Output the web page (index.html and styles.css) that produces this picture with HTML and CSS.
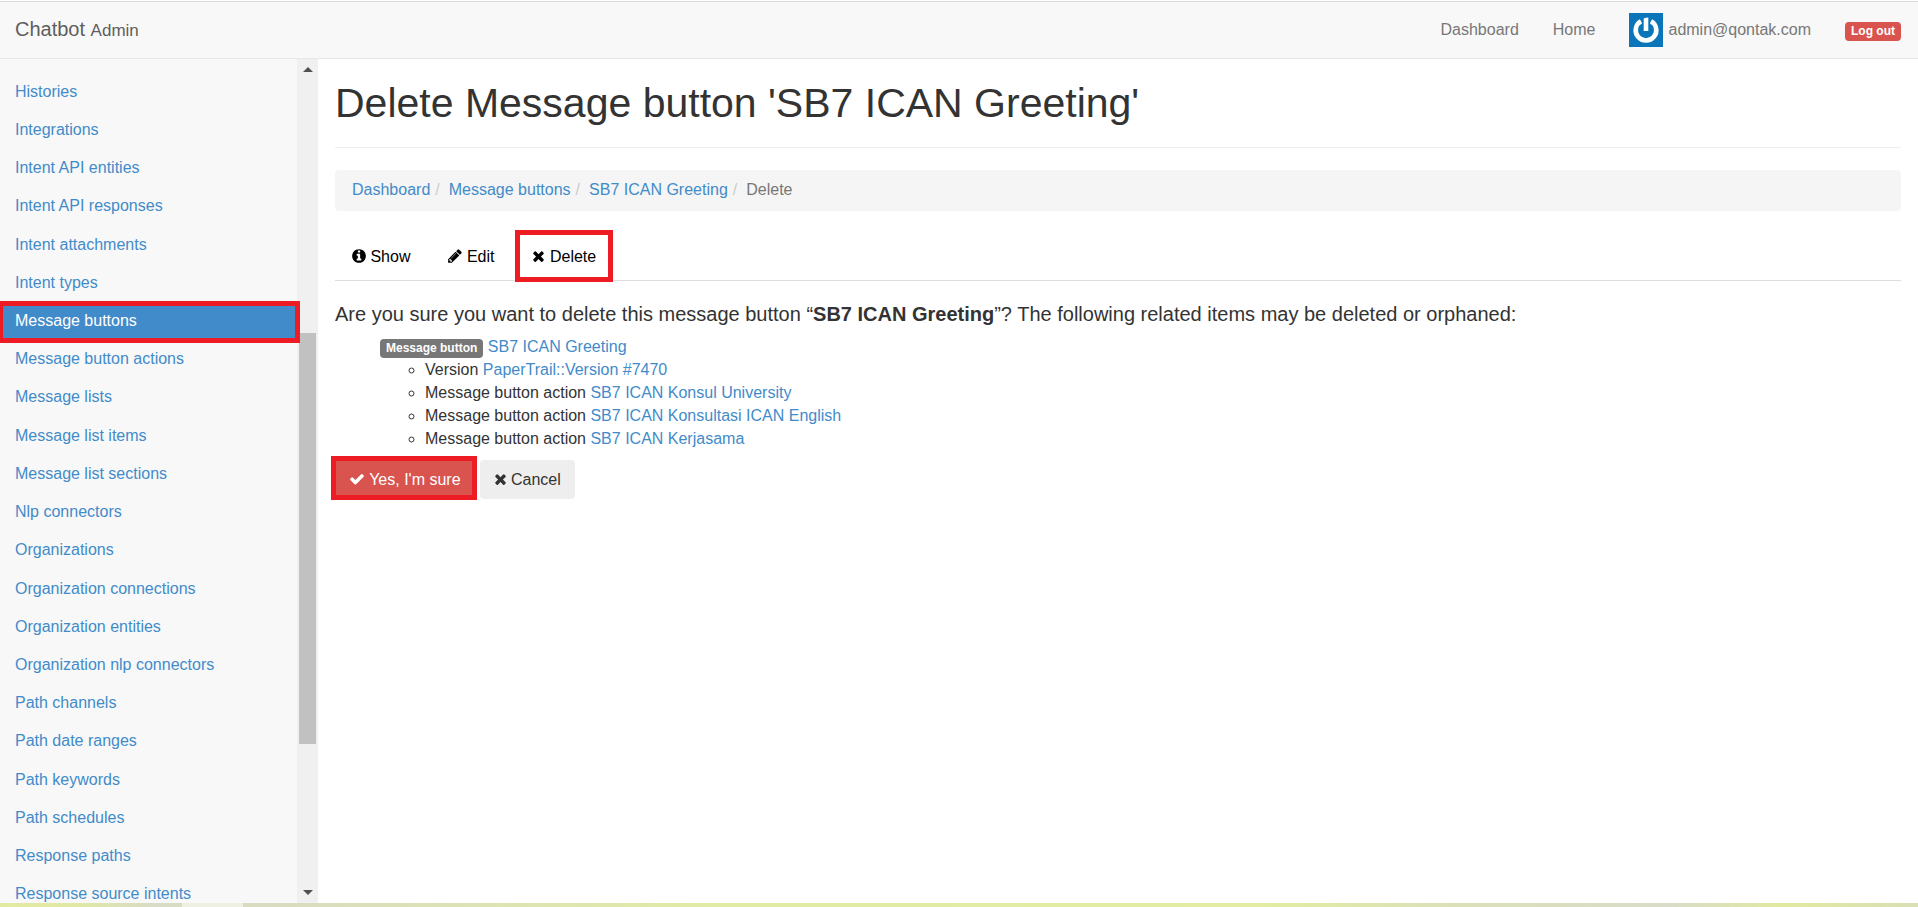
FILE: index.html
```html
<!DOCTYPE html>
<html lang="en">
<head>
<meta charset="utf-8">
<title>Delete Message button | Chatbot Admin</title>
<link rel="stylesheet" href="styles.css">
</head>
<body>
<svg class="sprite" aria-hidden="true">
  <symbol id="i-info" viewBox="128 0 1536 1792"><path d="M1152 1376v-160q0-14-9-23t-23-9h-96v-512q0-14-9-23t-23-9h-320q-14 0-23 9t-9 23v160q0 14 9 23t23 9h96v320h-96q-14 0-23 9t-9 23v160q0 14 9 23t23 9h448q14 0 23-9t9-23zm-128-896v-160q0-14-9-23t-23-9h-192q-14 0-23 9t-9 23v160q0 14 9 23t23 9h192q14 0 23-9t9-23zm640 416q0 209-103 385.5t-279.5 279.5-385.5 103-385.5-103-279.5-279.5-103-385.5 103-385.5 279.5-279.5 385.5-103 385.5 103 279.5 279.5 103 385.5z"/></symbol>
  <symbol id="i-pencil" viewBox="128 0 1536 1792"><path d="M491 1536l91-91-235-235-91 91v107h128v128h107zm523-928q0-22-22-22-10 0-17 7l-542 542q-7 7-7 17 0 22 22 22 10 0 17-7l542-542q7-7 7-17zm-54-192l416 416-832 832h-416v-416zm683 96q0 53-37 90l-166 166-416-416 166-165q36-38 90-38 53 0 91 38l235 234q37 39 37 91z"/></symbol>
  <symbol id="i-times" viewBox="192 0 1408 1792"><path d="M1490 1322q0 40-28 68l-136 136q-28 28-68 28t-68-28l-294-294-294 294q-28 28-68 28t-68-28l-136-136q-28-28-28-68t28-68l294-294-294-294q-28-28-28-68t28-68l136-136q28-28 68-28t68 28l294 294 294-294q28-28 68-28t68 28l136 136q28 28 28 68t-28 68l-294 294 294 294q28 28 28 68z"/></symbol>
  <symbol id="i-check" viewBox="0 0 1792 1792"><path d="M1671 566q0 40-28 68l-724 724-136 136q-28 28-68 28t-68-28l-136-136-362-362q-28-28-28-68t28-68l136-136q28-28 68-28t68 28l294 295 656-657q28-28 68-28t68 28l136 136q28 28 28 68z"/></symbol>
</svg>

<header class="topbar">
  <a class="brand" href="#">Chatbot <small>Admin</small></a>
  <nav class="topnav">
    <a href="#">Dashboard</a>
    <a href="#">Home</a>
    <a class="user" href="#">
      <svg class="avatar" viewBox="0 0 34 34" aria-hidden="true"><rect width="34" height="34" fill="#0a75b8"/><path d="M12 8.200A10.300 10.300 0 1 0 22 8.200" fill="none" stroke="#fff" stroke-width="4.600"/><path d="M14.700 5.600Q17 4.600 19.300 4.600V18H14.700Z" fill="#fff"/></svg>
      <span>admin@qontak.com</span>
    </a>
    <a href="#"><span class="label label-danger">Log out</span></a>
  </nav>
</header>

<div class="body">
  <aside class="sidebar">
    <ul class="menu">
      <li><a href="#">Histories</a></li>
      <li><a href="#">Integrations</a></li>
      <li><a href="#">Intent API entities</a></li>
      <li><a href="#">Intent API responses</a></li>
      <li><a href="#">Intent attachments</a></li>
      <li><a href="#">Intent types</a></li>
      <li class="active"><a href="#">Message buttons</a></li>
      <li><a href="#">Message button actions</a></li>
      <li><a href="#">Message lists</a></li>
      <li><a href="#">Message list items</a></li>
      <li><a href="#">Message list sections</a></li>
      <li><a href="#">Nlp connectors</a></li>
      <li><a href="#">Organizations</a></li>
      <li><a href="#">Organization connections</a></li>
      <li><a href="#">Organization entities</a></li>
      <li><a href="#">Organization nlp connectors</a></li>
      <li><a href="#">Path channels</a></li>
      <li><a href="#">Path date ranges</a></li>
      <li><a href="#">Path keywords</a></li>
      <li><a href="#">Path schedules</a></li>
      <li><a href="#">Response paths</a></li>
      <li><a href="#">Response source intents</a></li>
    </ul>
    <div class="scrollbar" aria-hidden="true">
      <svg class="arrow" viewBox="0 0 10 5"><path d="M0 5L5 0L10 5Z"/></svg>
      <div class="track"><div class="thumb"></div></div>
      <svg class="arrow" viewBox="0 0 10 5"><path d="M0 0L5 5L10 0Z"/></svg>
    </div>
  </aside>

  <main class="content">
    <h1>Delete Message button 'SB7 ICAN Greeting'</h1>
    <ol class="breadcrumb">
      <li><a href="#">Dashboard</a></li>
      <li><a href="#">Message buttons</a></li>
      <li><a href="#">SB7 ICAN Greeting</a></li>
      <li class="current">Delete</li>
    </ol>
    <nav class="tabs">
      <a href="#"><svg class="icon"><use href="#i-info"/></svg> Show</a>
      <a href="#"><svg class="icon"><use href="#i-pencil"/></svg> Edit</a>
      <a class="marked" href="#"><svg class="icon icon-times"><use href="#i-times"/></svg> Delete</a>
    </nav>
    <p class="lead">Are you sure you want to delete this message button “<strong>SB7 ICAN Greeting</strong>”? The following related items may be deleted or orphaned:</p>
    <ul class="related">
      <li>
        <span class="label">Message button</span> <a href="#">SB7 ICAN Greeting</a>
        <ul>
          <li>Version <a href="#">PaperTrail::Version #7470</a></li>
          <li>Message button action <a href="#">SB7 ICAN Konsul University</a></li>
          <li>Message button action <a href="#">SB7 ICAN Konsultasi ICAN English</a></li>
          <li>Message button action <a href="#">SB7 ICAN Kerjasama</a></li>
        </ul>
      </li>
    </ul>
    <form class="actions">
      <button class="btn btn-danger marked" type="button"><svg class="icon icon-check"><use href="#i-check"/></svg> Yes, I'm sure</button>
      <button class="btn" type="button"><svg class="icon icon-times"><use href="#i-times"/></svg> Cancel</button>
    </form>
  </main>
</div>
<div class="desktop-strip" aria-hidden="true"><i></i></div>
</body>
</html>
```

FILE: styles.css
```css
* { box-sizing: border-box; }

body {
  margin: 0;
  height: 100vh;
  display: flex;
  flex-direction: column;
  overflow: hidden;
  background: #fff;
  color: #333;
  font: 16px/23px "Liberation Sans", Arial, sans-serif;
}

a { color: #428bca; text-decoration: none; }
ul, ol { list-style: none; margin: 0; padding: 0; }
.sprite { display: none; }

.icon {
  width: 14px;
  height: 16px;
  fill: currentColor;
  vertical-align: -2px;
}
.icon-times { width: 13px; }
.icon-check { width: 16px; }

.label {
  display: inline-block;
  padding: 0 6px;
  border-radius: 4px;
  background: #777;
  color: #fff;
  font-size: 12px;
  font-weight: bold;
  line-height: 19px;
}
.label-danger { background: #d9534f; }

/* Top bar */
.topbar {
  flex: none;
  display: flex;
  justify-content: space-between;
  align-items: center;
  height: 59px;
  border-bottom: 1px solid #e7e7e7;
  background: #f8f8f8;
  box-shadow: inset 0 1px #fff, inset 0 2px #d9dcdb;
}
.brand { padding: 2px 0 0 15px; color: #5e5e5e; font-size: 20px; }
.brand small { font-size: 17px; }
.topnav { display: flex; align-items: center; }
.topnav a { padding: 0 17px; color: #777; }
.topnav .user { display: flex; align-items: center; gap: 5px; }
.topnav .label { display: block; margin-top: 4px; }
.avatar { width: 34px; height: 34px; margin-top: 2px; }

/* Sidebar */
.body { flex: 1; min-height: 0; display: flex; }
.sidebar {
  flex: none;
  width: 318px;
  display: flex;
  overflow: hidden;
  background: #f8f8f8;
}
.menu {
  flex: 1;
  display: grid;
  grid-auto-rows: 1fr;
  margin: 13px 0 -10px;
}
.menu li { position: relative; display: grid; }
.menu a { display: flex; align-items: center; padding-left: 15px; }
.menu .active { background: #428bca; }
.menu .active a { color: #fff; }
.menu .active::after {
  content: "";
  position: absolute;
  inset: 0 -3px -3px -2px;
  border: 5px solid #ed1c24;
}
.scrollbar {
  width: 21px;
  display: flex;
  flex-direction: column;
  align-items: center;
  gap: 8px;
  padding: 8px 2px;
  background: #f0f0f0;
}
.arrow { width: 10px; height: 5px; fill: #505050; }
.track { flex: 1; width: 100%; padding-top: 253px; padding-bottom: 138px; }
.thumb { height: 100%; background: #c1c1c1; }

/* Content */
.content { flex: 1; padding: 22px 17px 0; }
h1 {
  margin: 0 0 22px;
  padding-bottom: 21px;
  border-bottom: 1px solid #eee;
  font-size: 41px;
  font-weight: normal;
  line-height: 45px;
}
.breadcrumb {
  display: flex;
  margin-bottom: 23px;
  padding: 8px 17px 10px;
  border-radius: 4px;
  background: #f5f5f5;
}
.breadcrumb li + li::before { content: "/"; padding: 0 9px 0 5px; color: #ccc; }
.breadcrumb .current { color: #777; }

.tabs { display: flex; gap: 4px; border-bottom: 1px solid #ddd; }
.tabs a { padding: 11px 17px 12px; color: #000; }

.marked { position: relative; }
.marked::after {
  content: "";
  position: absolute;
  inset: -4px -2px -1px -4px;
  border: 5px solid #ed1c24;
}
.tabs .marked::after { inset: -4px 0 -2px; }

.lead { margin: 20px 0 8px; font-size: 20px; line-height: 26px; }
.related { margin: 0 0 10px 45px; }
.related .label { margin: 4px 0 -4px; vertical-align: top; }
.related ul { list-style: circle; padding-left: 45px; }

.actions { display: flex; gap: 5px; }
.btn {
  padding: 8px 14px;
  border: 0;
  border-radius: 4px;
  background: #eee;
  color: #333;
  font: inherit;
}
.btn-danger { background: #d9534f; color: #fff; }

/* Sliver of the desktop under the window */
.desktop-strip {
  flex: none;
  height: 4px;
  background: linear-gradient(90deg, #e3eaa0 0, #e0e8a4 4%, #d9dcc6 8%, #d9dcc0 14%, #e2eba4 38%, #e3eca2 66%, #dbe0b8 76%, #d9dcc8 87%, #e1e9a0 93%, #dadfb4 100%);
}
.desktop-strip i { display: block; width: 61px; height: 4px; margin-left: 182px; background: #eef0e2; }
```
